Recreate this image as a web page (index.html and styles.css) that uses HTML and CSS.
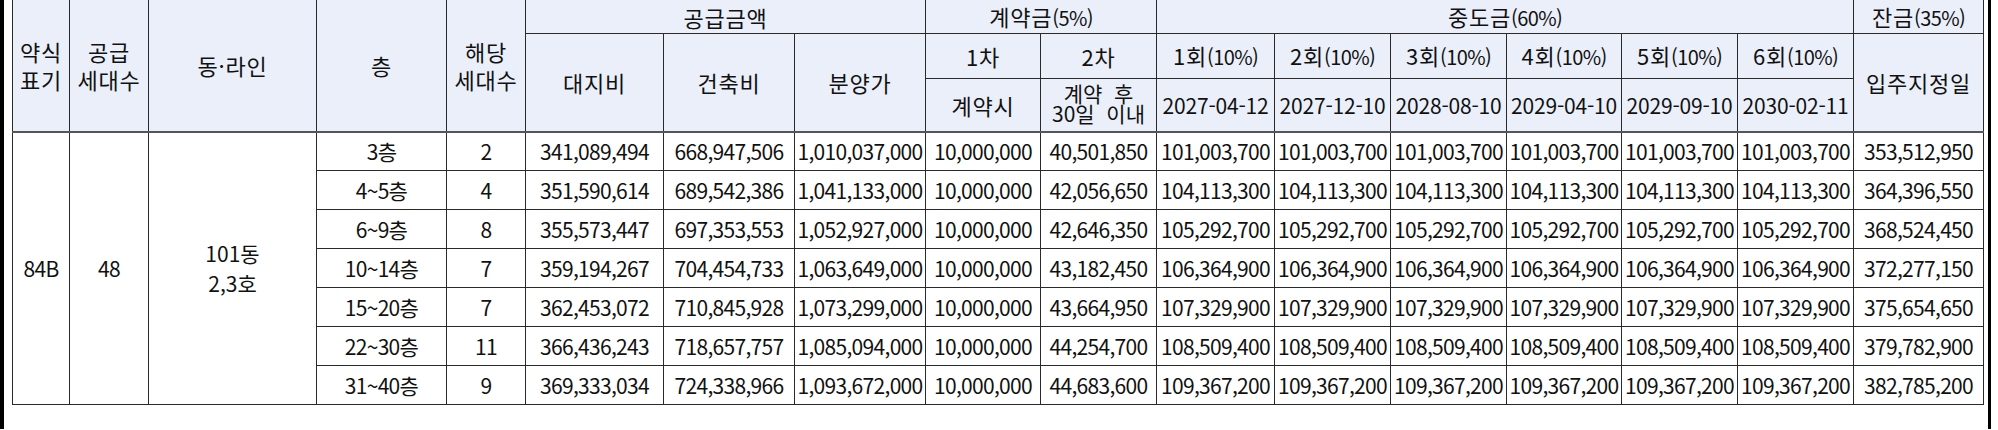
FILE: index.html
```html
<!DOCTYPE html>
<html lang="ko">
<head>
<meta charset="utf-8">
<link rel="stylesheet" href="styles.css">
</head>
<body>
<div class="frame">
<table class="price">
<colgroup>
<col class="w57"><col class="w79"><col class="w168"><col class="w130"><col class="w79">
<col class="w138"><col class="w131"><col class="w131"><col class="w115"><col class="w116">
<col class="w118"><col class="w116"><col class="w116"><col class="w115"><col class="w116"><col class="w116"><col class="w130">
</colgroup>
<thead>
<tr class="h1">
<th rowspan="3">약식<br>표기</th>
<th rowspan="3">공급<br>세대수</th>
<th rowspan="3">동·라인</th>
<th rowspan="3">층</th>
<th rowspan="3">해당<br>세대수</th>
<th colspan="3">공급금액</th>
<th colspan="2">계약금<span class="lat">(5%)</span></th>
<th colspan="6">중도금<span class="lat">(60%)</span></th>
<th>잔금<span class="lat">(35%)</span></th>
</tr>
<tr class="h2">
<th rowspan="2">대지비</th>
<th rowspan="2">건축비</th>
<th rowspan="2">분양가</th>
<th>1차</th>
<th>2차</th>
<th>1회<span class="lat">(10%)</span></th>
<th>2회<span class="lat">(10%)</span></th>
<th>3회<span class="lat">(10%)</span></th>
<th>4회<span class="lat">(10%)</span></th>
<th>5회<span class="lat">(10%)</span></th>
<th>6회<span class="lat">(10%)</span></th>
<th rowspan="2">입주지정일</th>
</tr>
<tr class="h3">
<th>계약시</th>
<th class="tight">계약&nbsp;&nbsp;후<br>30일&nbsp;&nbsp;이내</th>
<th class="date">2027-04-12</th>
<th class="date">2027-12-10</th>
<th class="date">2028-08-10</th>
<th class="date">2029-04-10</th>
<th class="date">2029-09-10</th>
<th class="date">2030-02-11</th>
</tr>
</thead>
<tbody>
<tr>
<td rowspan="7">84B</td>
<td rowspan="7">48</td>
<td rowspan="7" class="two">101동<br>2,3호</td>
<td>3층</td><td>2</td>
<td>341,089,494</td><td>668,947,506</td><td>1,010,037,000</td><td>10,000,000</td><td>40,501,850</td>
<td>101,003,700</td><td>101,003,700</td><td>101,003,700</td><td>101,003,700</td><td>101,003,700</td><td>101,003,700</td><td>353,512,950</td>
</tr>
<tr>
<td>4~5층</td><td>4</td>
<td>351,590,614</td><td>689,542,386</td><td>1,041,133,000</td><td>10,000,000</td><td>42,056,650</td>
<td>104,113,300</td><td>104,113,300</td><td>104,113,300</td><td>104,113,300</td><td>104,113,300</td><td>104,113,300</td><td>364,396,550</td>
</tr>
<tr>
<td>6~9층</td><td>8</td>
<td>355,573,447</td><td>697,353,553</td><td>1,052,927,000</td><td>10,000,000</td><td>42,646,350</td>
<td>105,292,700</td><td>105,292,700</td><td>105,292,700</td><td>105,292,700</td><td>105,292,700</td><td>105,292,700</td><td>368,524,450</td>
</tr>
<tr>
<td>10~14층</td><td>7</td>
<td>359,194,267</td><td>704,454,733</td><td>1,063,649,000</td><td>10,000,000</td><td>43,182,450</td>
<td>106,364,900</td><td>106,364,900</td><td>106,364,900</td><td>106,364,900</td><td>106,364,900</td><td>106,364,900</td><td>372,277,150</td>
</tr>
<tr>
<td>15~20층</td><td>7</td>
<td>362,453,072</td><td>710,845,928</td><td>1,073,299,000</td><td>10,000,000</td><td>43,664,950</td>
<td>107,329,900</td><td>107,329,900</td><td>107,329,900</td><td>107,329,900</td><td>107,329,900</td><td>107,329,900</td><td>375,654,650</td>
</tr>
<tr>
<td>22~30층</td><td>11</td>
<td>366,436,243</td><td>718,657,757</td><td>1,085,094,000</td><td>10,000,000</td><td>44,254,700</td>
<td>108,509,400</td><td>108,509,400</td><td>108,509,400</td><td>108,509,400</td><td>108,509,400</td><td>108,509,400</td><td>379,782,900</td>
</tr>
<tr>
<td>31~40층</td><td>9</td>
<td>369,333,034</td><td>724,338,966</td><td>1,093,672,000</td><td>10,000,000</td><td>44,683,600</td>
<td>109,367,200</td><td>109,367,200</td><td>109,367,200</td><td>109,367,200</td><td>109,367,200</td><td>109,367,200</td><td>382,785,200</td>
</tr>
</tbody>
</table>
</div>
</body>
</html>
```

FILE: styles.css
```css
html, body {
  margin: 0;
  padding: 0;
  background: #ffffff;
}
body {
  width: 1998px;
  height: 430px;
  overflow: hidden;
  font-family: "Noto Sans CJK KR", "Noto Sans", sans-serif;
  color: #111111;
}
.frame {
  width: 1991px;
  height: 430px;
  box-sizing: border-box;
  border-left: 4px solid #000000;
  border-right: 3px solid #000000;
  padding-left: 8px;
  padding-right: 4px;
}
.price {
  border-collapse: collapse;
  table-layout: fixed;
  width: 1972px;
  margin-top: -1px;
  font-size: 21px;
}
.price th,
.price td {
  border: 1px solid #2a2a2a;
  padding: 0;
  text-align: center;
  vertical-align: middle;
  white-space: nowrap;
  overflow: hidden;
}
.price th {
  background: #eaeff9;
  font-weight: 400;
  font-size: 22px;
  line-height: 28px;
  letter-spacing: 0.8px;
}
.price thead tr:last-child th,
.price thead th[rowspan="3"],
.price thead th[rowspan="2"] {
  border-bottom: 2px solid #555555;
}
.h1 { height: 34px; }
.h2 { height: 45px; }
.h3 { height: 53px; }
.price .tight { font-size: 21px; line-height: 20px; padding-bottom: 4px; letter-spacing: 0; }
.price .date { font-size: 21px; letter-spacing: -0.2px; }
.price tbody tr { height: 39px; }
.price td { line-height: 24px; letter-spacing: -0.7px; }
.price td.two { line-height: 30px; letter-spacing: 0; }
.lat { letter-spacing: -0.6px; font-size: 20px; }
.w57 { width: 57px; }
.w79 { width: 79px; }
.w168 { width: 168px; }
.w130 { width: 130px; }
.w138 { width: 138px; }
.w131 { width: 131px; }
.w115 { width: 115px; }
.w116 { width: 116px; }
.w118 { width: 118px; }
```
